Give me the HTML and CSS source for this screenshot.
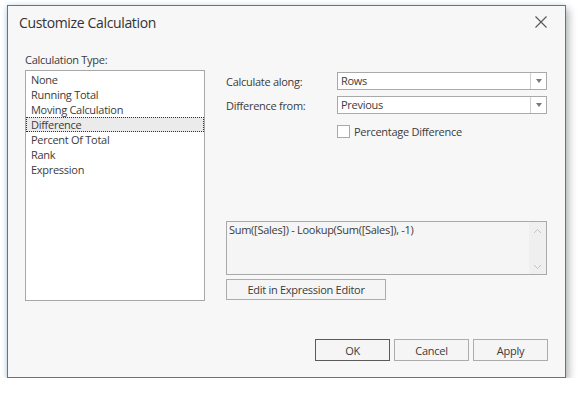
FILE: index.html
```html
<!DOCTYPE html>
<html>
<head>
    <title>Customize Calculation</title>
    <link rel="stylesheet" href="styles.css">
</head>
<body>
    <div class="dialog">
        <div class="title-bar">
            <span class="title">Customize Calculation</span>
            <svg class="close" width="12" height="12" viewBox="0 0 12 12">
                <path d="M0.5 0.5 L11.5 11.5 M11.5 0.5 L0.5 11.5" stroke="#555" stroke-width="1.1" fill="none"/>
            </svg>
        </div>

        <div class="main">
            <div class="left">
                <div class="caption">Calculation Type:</div>
                <div class="list">
                    <div class="item">None</div>
                    <div class="item">Running Total</div>
                    <div class="item">Moving Calculation</div>
                    <div class="item selected">Difference</div>
                    <div class="item">Percent Of Total</div>
                    <div class="item">Rank</div>
                    <div class="item">Expression</div>
                </div>
            </div>

            <div class="right">
                <div class="form">
                    <label>Calculate along:</label>
                    <div class="combo">
                        <span class="combo-text">Rows</span>
                        <span class="combo-btn"><span class="arrow"></span></span>
                    </div>
                    <label>Difference from:</label>
                    <div class="combo">
                        <span class="combo-text">Previous</span>
                        <span class="combo-btn"><span class="arrow"></span></span>
                    </div>
                    <span></span>
                    <div class="check">
                        <span class="box"></span>
                        <span>Percentage Difference</span>
                    </div>
                </div>

                <div class="expression">
                    <div class="expr-text">Sum([Sales]) - Lookup(Sum([Sales]), -1)</div>
                    <div class="scroll">
                        <svg width="9" height="6" viewBox="0 0 9 6"><path d="M1 5 L4.5 1.5 L8 5" stroke="#c4c4c4" fill="none"/></svg>
                        <svg width="9" height="6" viewBox="0 0 9 6"><path d="M1 1 L4.5 4.5 L8 1" stroke="#c4c4c4" fill="none"/></svg>
                    </div>
                </div>
                <button class="btn editor-btn">Edit in Expression Editor</button>
            </div>
        </div>

        <div class="footer">
            <button class="btn default">OK</button>
            <button class="btn">Cancel</button>
            <button class="btn">Apply</button>
        </div>
    </div>
</body>
</html>
```

FILE: styles.css
```css
body {
    margin: 0;
    background-color: #ffffff;
    font-family: "Open Sans", "Noto Sans", sans-serif;
    font-size: 11px;
    letter-spacing: -0.28px;
    color: #3b3b3b;
}
.dialog {
    margin: 5px 0 0 7px;
    width: 557px;
    height: 371px;
    border: 1px solid #2a8c9e;
    background-color: #f7f7f7;
    box-shadow: 3px 4px 8px rgba(0, 0, 0, 0.28), -1px 0 4px rgba(120, 190, 230, 0.35);
    display: flex;
    flex-direction: column;
}
.title-bar {
    height: 32px;
    display: flex;
    align-items: center;
    justify-content: space-between;
    padding: 0 18px 0 11px;
}
.title {
    font-size: 14px;
    letter-spacing: -0.35px;
    color: #333;
}
.main {
    display: flex;
    padding: 14px 0 0 17px;
}
.left {
    width: 180px;
}
.caption {
    height: 15px;
    line-height: 15px;
    margin-bottom: 3px;
}
.list {
    height: 228px;
    border: 1px solid #a8a8a8;
    background-color: #fff;
    padding-top: 1px;
}
.item {
    height: 15px;
    line-height: 15px;
    padding-left: 4px;
    border: 1px solid transparent;
    border-top: none;
    border-bottom: none;
}
.item.selected {
    background-color: #ebebeb;
    border: 1px dotted #333;
    height: 13px;
    line-height: 13px;
}
.right {
    margin-left: 21px;
    width: 321px;
    padding-top: 20px;
}
.form {
    display: grid;
    grid-template-columns: 111px 210px;
    row-gap: 6px;
    align-items: center;
}
.combo {
    height: 16px;
    border: 1px solid #a9a9a9;
    background-color: #fff;
    display: flex;
}
.combo-text {
    flex: 1;
    line-height: 16px;
    padding-left: 3px;
}
.combo-btn {
    width: 15px;
    border-left: 1px solid #cfcfcf;
    display: flex;
    align-items: center;
    justify-content: center;
}
.arrow {
    width: 0;
    height: 0;
    border-left: 3px solid transparent;
    border-right: 3px solid transparent;
    border-top: 4px solid #7a7a7a;
}
.check {
    display: flex;
    align-items: center;
    gap: 4px;
    margin-top: 4px;
}
.box {
    width: 11px;
    height: 11px;
    border: 1px solid #a9a9a9;
    background-color: #fff;
}
.expression {
    margin-top: 82px;
    height: 52px;
    border: 1px solid #a9a9a9;
    background-color: #f5f5f5;
    display: flex;
}
.expr-text {
    flex: 1;
    padding: 1px 2px;
    line-height: 14px;
}
.scroll {
    width: 17px;
    background-color: #efefef;
    display: flex;
    flex-direction: column;
    justify-content: space-between;
    align-items: center;
    padding: 6px 0 4px;
}
.btn {
    font-family: "Open Sans", "Noto Sans", sans-serif;
    font-size: 11px;
    letter-spacing: -0.28px;
    color: #3b3b3b;
    background-color: #f5f5f5;
    border: 1px solid #acacac;
    padding: 0;
    height: 22px;
    width: 75px;
}
.editor-btn {
    margin-top: 4px;
    width: 160px;
    height: 21px;
}
.footer {
    margin-top: auto;
    display: flex;
    justify-content: flex-end;
    gap: 4px;
    padding: 0 17px 16px 0;
}
.btn.default {
    border-color: #5a5a5a;
}
```
